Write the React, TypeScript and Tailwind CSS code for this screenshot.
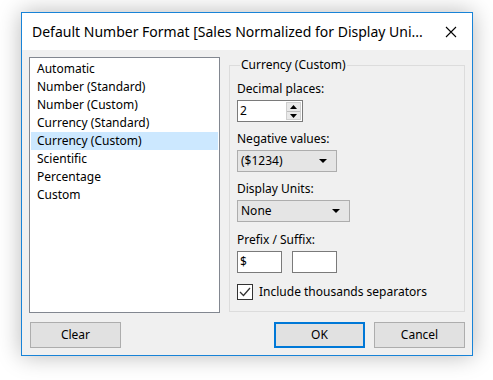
const items = [
  "Automatic",
  "Number (Standard)",
  "Number (Custom)",
  "Currency (Standard)",
  "Currency (Custom)",
  "Scientific",
  "Percentage",
  "Custom",
];

function Dropdown({ value, width }: { value: string; width: string }) {
  return (
    <div
      className={`mt-[3px] flex h-[22px] ${width} items-center justify-between border border-[#adadad] bg-[#e5e5e5] pl-[3px] pr-[9px]`}
    >
      <span>{value}</span>
      <svg width="8" height="4" viewBox="0 0 8 4">
        <path d="M0 0H8L4 4Z" fill="#000" />
      </svg>
    </div>
  );
}

export default function App() {
  return (
    <div
      className="h-[380px] w-[493px] bg-white pl-[21px] pt-[12px] text-[12px] text-black"
      style={{ fontFamily: '"Noto Sans", "Open Sans", sans-serif' }}
    >
      <div className="flex h-[344px] w-[452px] flex-col border border-[#1883d7] shadow-[0_0_22px_rgba(0,0,0,0.28)]">
        {/* title bar */}
        <div className="flex h-[37px] items-center justify-between bg-white pl-[10px] pr-[15px] text-[14px]">
          <span className="whitespace-nowrap">Default Number Format [Sales Normalized for Display Uni...</span>
          <svg width="12" height="12" viewBox="0 0 12 12" className="shrink-0">
            <path d="M1 1L11 11M11 1L1 11" stroke="#000" strokeWidth="1.1" />
          </svg>
        </div>

        <div className="flex flex-1 flex-col bg-[#f0f0f0] px-[7px] pt-[7px]">
          <div className="flex gap-[9px]">
            {/* format list */}
            <div className="h-[256px] w-[191px] border border-[#828790] bg-white px-px pt-[2px]">
              {items.map((item) => (
                <div
                  key={item}
                  className={`flex h-[18px] items-center pl-[6px] ${
                    item === "Currency (Custom)" ? "bg-[#cce8ff]" : ""
                  }`}
                >
                  {item}
                </div>
              ))}
            </div>

            {/* options group */}
            <fieldset className="h-[255px] w-[236px] border border-[#dcdcdc] pl-[7px]">
              <legend className="ml-[3px] px-[1px] leading-[16px]">Currency (Custom)</legend>

              <div className="mt-[8px] leading-[16px]">Decimal places:</div>
              <div className="mt-[3px] flex h-[22px] w-[66px] items-center border border-[#7a7a7a] bg-white pl-[2px]">
                <span className="flex-1">2</span>
                <div className="mr-px flex h-[18px] w-[15px] flex-col items-center justify-center gap-[2px] border border-[#cfcfcf] bg-[#e9e9e9]">
                  <svg width="7" height="4" viewBox="0 0 7 4">
                    <path d="M0 4H7L3.5 0Z" fill="#000" />
                  </svg>
                  <div className="h-px w-[13px] bg-[#bdbdbd]" />
                  <svg width="7" height="4" viewBox="0 0 7 4">
                    <path d="M0 0H7L3.5 4Z" fill="#000" />
                  </svg>
                </div>
              </div>

              <div className="mt-[9px] leading-[16px]">Negative values:</div>
              <Dropdown value="($1234)" width="w-[100px]" />

              <div className="mt-[9px] leading-[16px]">Display Units:</div>
              <Dropdown value="None" width="w-[113px]" />

              <div className="mt-[10px] leading-[16px]">Prefix / Suffix:</div>
              <div className="mt-[3px] flex gap-[10px]">
                <div className="flex h-[22px] w-[45px] items-center border border-[#7a7a7a] bg-white pl-[2px]">
                  $
                </div>
                <div className="h-[22px] w-[45px] border border-[#7a7a7a] bg-white" />
              </div>

              <div className="mt-[10px] flex items-center gap-[6px]">
                <div className="flex h-[16px] w-[16px] items-center justify-center border border-[#333] bg-white">
                  <svg width="12" height="10" viewBox="0 0 12 10">
                    <path d="M1 5L4.5 8.5L11 1" fill="none" stroke="#333" strokeWidth="1.3" />
                  </svg>
                </div>
                <span>Include thousands separators</span>
              </div>
            </fieldset>
          </div>

          {/* buttons */}
          <div className="mt-[9px] flex items-center pl-px">
            <button className="h-[26px] w-[91px] border border-[#adadad] bg-[#e1e1e1]">Clear</button>
            <div className="flex-1" />
            <button className="h-[26px] w-[91px] border-2 border-[#0078d7] bg-[#e1e1e1]">OK</button>
            <button className="ml-[9px] h-[26px] w-[91px] border border-[#adadad] bg-[#e1e1e1]">Cancel</button>
          </div>
        </div>
      </div>
    </div>
  );
}
